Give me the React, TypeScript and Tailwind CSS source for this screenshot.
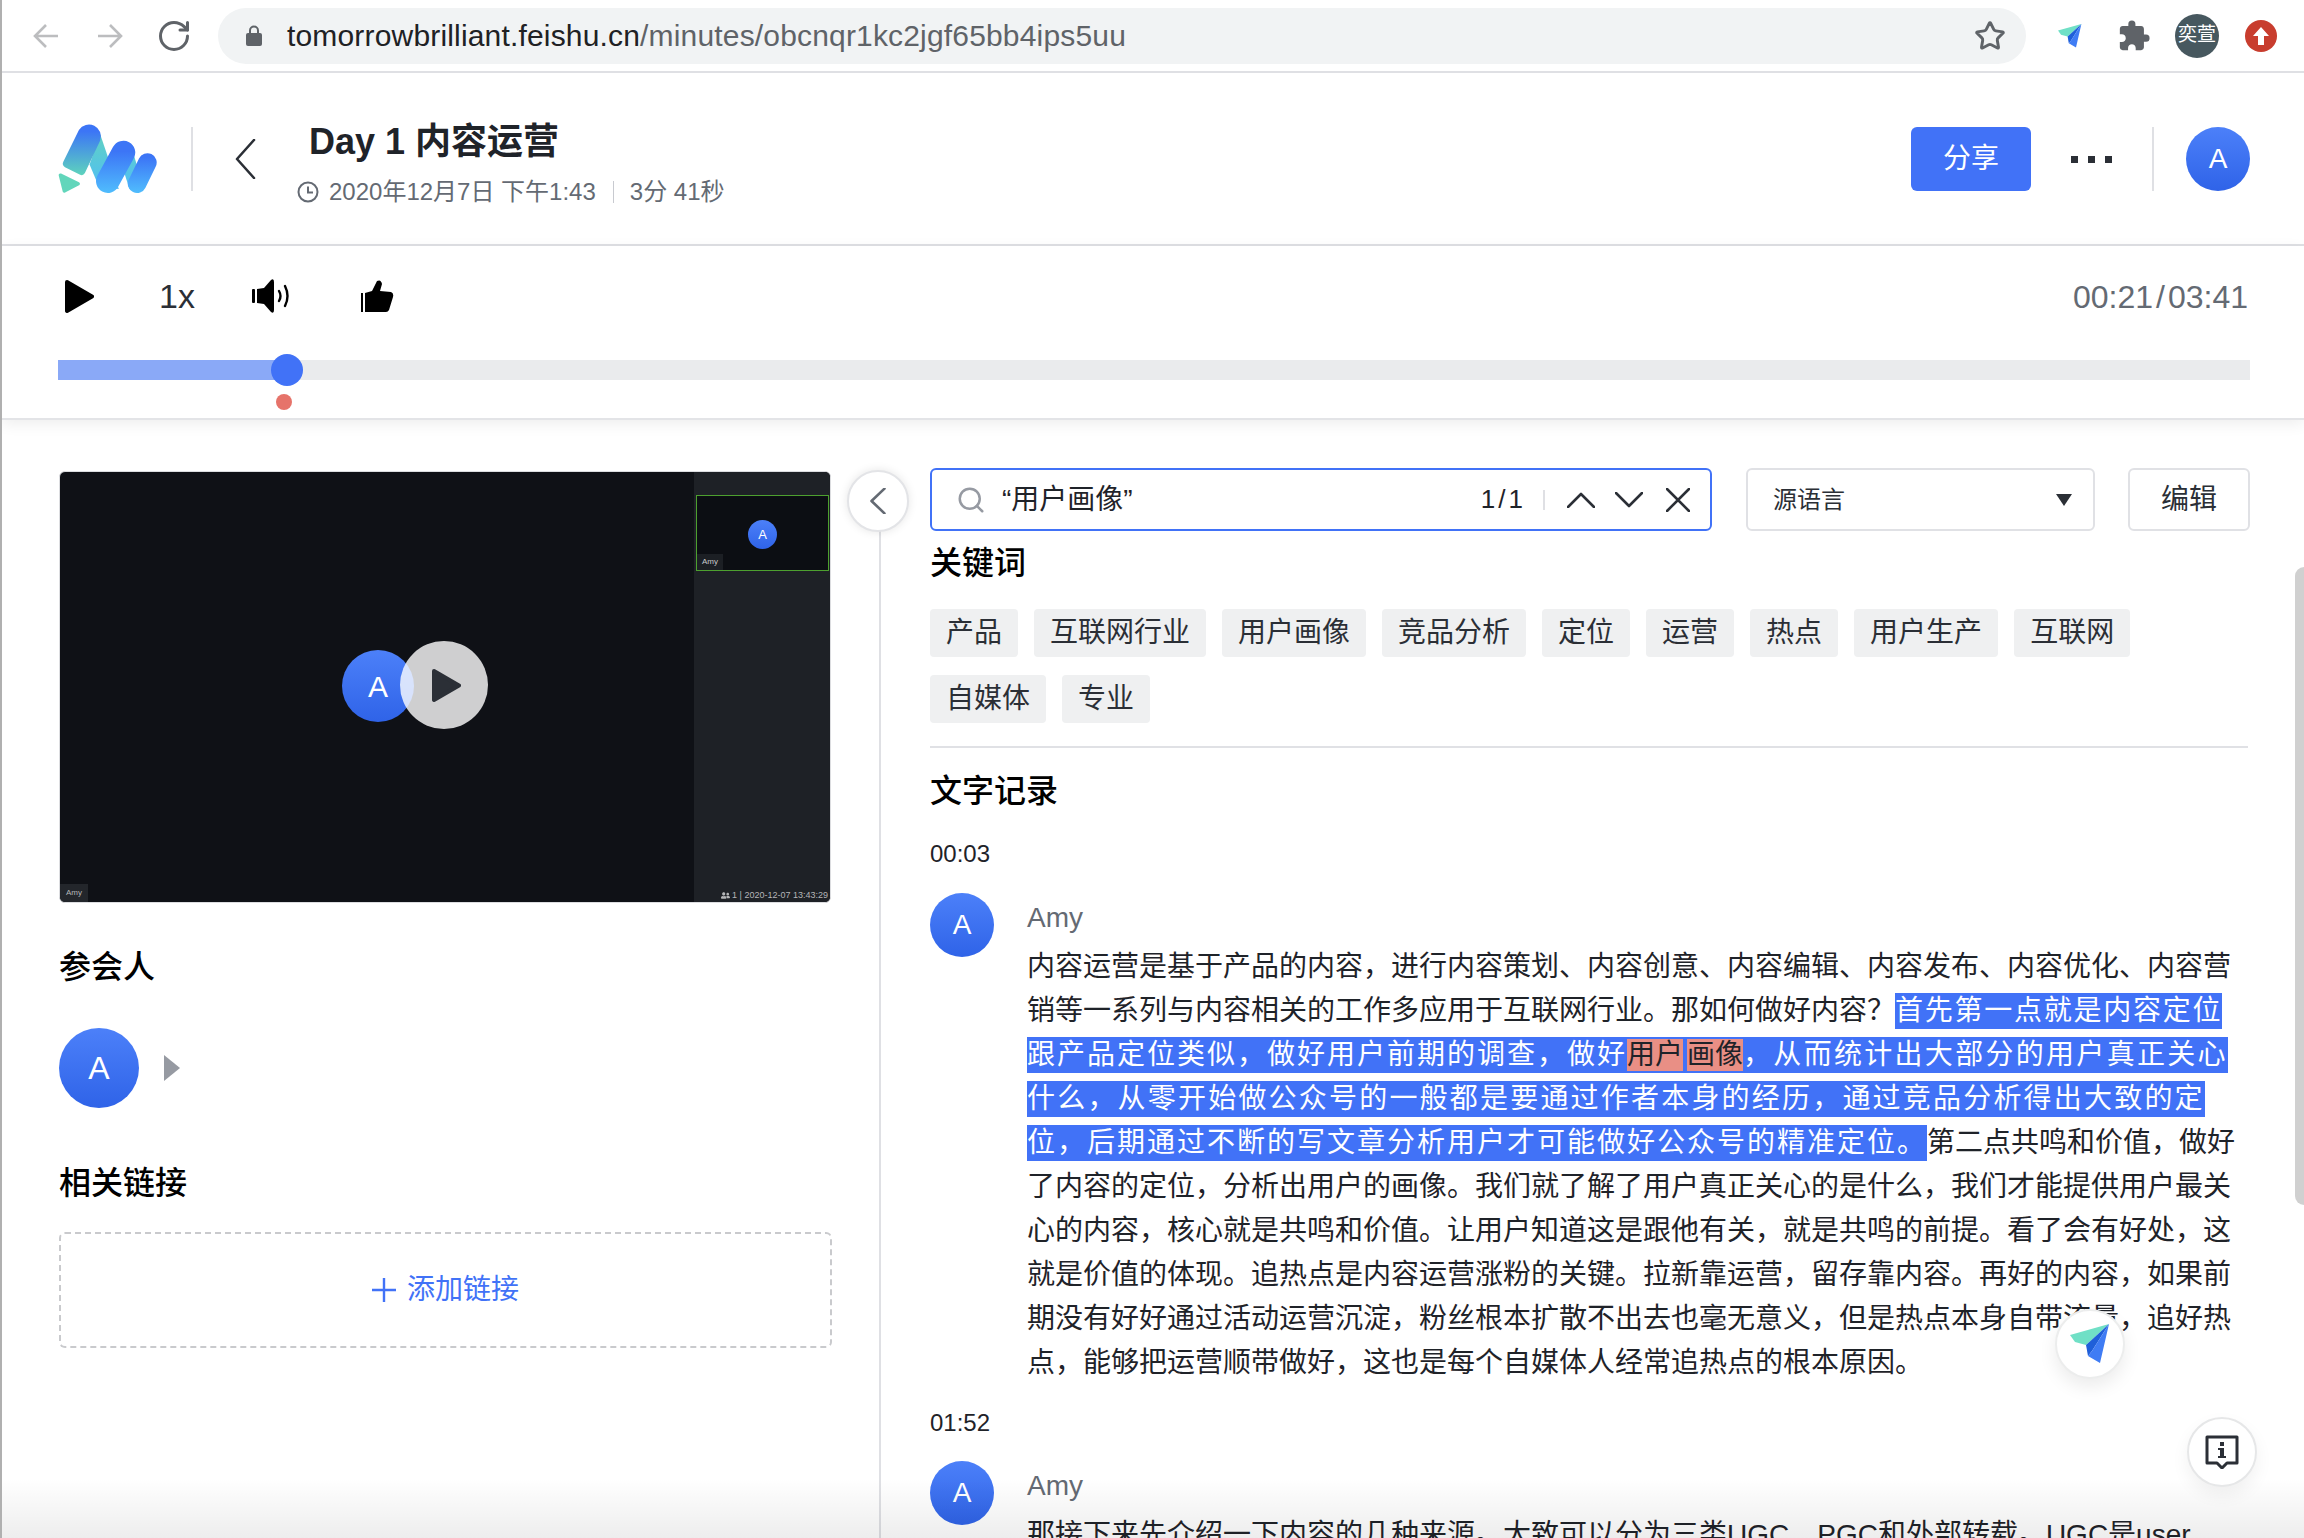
import React from 'react';
import { RotateCw, Star, Search } from 'lucide-react';
import { FaUserFriends } from 'react-icons/fa';
import { MdExtension } from 'react-icons/md';

const keywordsRow1 = ['产品', '互联网行业', '用户画像', '竞品分析', '定位', '运营', '热点', '用户生产', '互联网'];
const keywordsRow2 = ['自媒体', '专业'];

const Avatar: React.FC<{ className: string }> = ({ className }) => (
  <div className={`flex shrink-0 items-center justify-center rounded-full bg-linear-to-b from-[#4c80f9] to-[#2f63e8] text-white ${className}`}>
    A
  </div>
);

const Logo = () => (
  <svg viewBox="50 60 310 230" className="mb-[4px] h-[77px] w-[103px] shrink-0">
    <defs>
      <linearGradient id="pencil" x1="0" y1="72" x2="0" y2="232" gradientUnits="userSpaceOnUse">
        <stop offset="0.15" stopColor="#3c75f6" />
        <stop offset="1" stopColor="#5fd6bb" />
      </linearGradient>
      <linearGradient id="ribbon" x1="0" y1="110" x2="0" y2="280" gradientUnits="userSpaceOnUse">
        <stop offset="0" stopColor="#5fd0c4" />
        <stop offset="1" stopColor="#4fbdfa" />
      </linearGradient>
      <linearGradient id="barTwo" x1="0" y1="125" x2="0" y2="282" gradientUnits="userSpaceOnUse">
        <stop offset="0.2" stopColor="#3c75f6" />
        <stop offset="1" stopColor="#50bdfd" />
      </linearGradient>
      <linearGradient id="barThree" x1="0" y1="162" x2="0" y2="282" gradientUnits="userSpaceOnUse">
        <stop offset="0.1" stopColor="#3c75f6" />
        <stop offset="1" stopColor="#50bdfd" />
      </linearGradient>
    </defs>
    <path d="M180 105 L236 270 L176 262 L148 196 Z" fill="url(#ribbon)" />
    <path d="M276 150 L312 270 L268 270 L246 200 Z" fill="url(#ribbon)" />
    <path d="M116 92 A36 36 0 0 1 180 124 L134 222 Q128 232 118 226 L74 204 Q64 198 69 188 Z" fill="url(#pencil)" />
    <line x1="250" y1="160" x2="203" y2="246" stroke="url(#barTwo)" strokeWidth="71" strokeLinecap="round" />
    <line x1="322" y1="190" x2="291" y2="254" stroke="url(#barThree)" strokeWidth="56" strokeLinecap="round" />
    <path d="M60 228 L114 254 L72 276 Z" fill="#62d6bb" stroke="#62d6bb" strokeWidth="10" strokeLinejoin="round" />
  </svg>
);

const PlaneIcon: React.FC<{ className: string }> = ({ className }) => (
  <svg viewBox="0 0 40 40" className={className}>
    <path d="M0 11 L39 0 L16 21 L5 18 Z" fill="#70e0c6" />
    <path d="M39 0 L16 21 L18 32 L22 27 Z" fill="#1f5fd9" />
    <path d="M39 0 L22 27 L18 32 L30 39 Z" fill="#3f7cf4" />
  </svg>
);

const Speaker = () => (
  <svg viewBox="0 0 39 34" className="ml-[57px] h-[34px] w-[39px]">
    <rect x="0" y="10" width="3" height="14" rx="1" fill="#000" />
    <path d="M5 10 L12 9 L19 1 Q22 -1 22 3 L22 31 Q22 35 19 33 L12 25 L5 24 Z" fill="#000" />
    <path d="M27 12 Q30 17 27 22" fill="none" stroke="#000" strokeWidth="2.4" strokeLinecap="round" />
    <path d="M33 7 Q38 17 33 27" fill="none" stroke="#000" strokeWidth="2.4" strokeLinecap="round" />
  </svg>
);

const Thumb = () => (
  <svg viewBox="0 0 33 32" className="ml-[70px] h-[32px] w-[33px]">
    <rect x="0" y="13" width="2" height="19" fill="#000" />
    <path d="M4 13 L11 11 L16 1 Q20 -1 21 4 L19 11 L30 12 Q33 13 32 17 L28 30 Q27 32 25 32 L4 32 Z" fill="#000" />
  </svg>
);

// thin chevron stretched to its box, dir is the way the tip points
const Chevron: React.FC<{ dir: 'up' | 'down' | 'left'; className: string; color: string }> = ({ dir, className, color }) => {
  const d = dir === 'up' ? 'M1 15 L14 2 L27 15' : dir === 'down' ? 'M1 1 L14 14 L27 1' : 'M19 1 L2 20 L19 39';
  const box = dir === 'left' ? '0 0 21 40' : '0 0 28 16';
  return (
    <svg viewBox={box} preserveAspectRatio="none" className={className}>
      <path d={d} fill="none" stroke={color} strokeWidth="2.6" strokeLinecap="round" strokeLinejoin="round" vectorEffect="non-scaling-stroke" />
    </svg>
  );
};

const Sel: React.FC<{ children: React.ReactNode; className?: string }> = ({ children, className = 'tracking-[2px]' }) => (
  <span className={`inline-block h-[36px] bg-[#4172f7] leading-[36px] text-white ${className}`}>{children}</span>
);

const Mark: React.FC<{ children: React.ReactNode; className?: string }> = ({ children, className = '' }) => (
  <span className={`inline-block h-[36px] bg-[#4172f7] pt-[2px] ${className}`}>
    <span className="block h-[32px] bg-[#e98f85] leading-[32px] text-[#1f2329]">{children}</span>
  </span>
);

const Line: React.FC<{ children: React.ReactNode }> = ({ children }) => (
  <div className="flex h-[44px] items-center whitespace-nowrap text-[28px] text-[#1f2329]">{children}</div>
);

export default function App() {
  return (
    <div className="relative h-screen w-full overflow-hidden border-l-2 border-[#b0b0b0] bg-white [font-family:'Liberation_Sans','Noto_Sans_CJK_SC',sans-serif]">
      {/* browser toolbar */}
      <div className="flex h-[73px] items-center border-b-2 border-[#dfe0e4]">
        <svg viewBox="0 0 26 24" className="ml-[31px] h-[24px] w-[26px]">
          <path d="M25 12 H2 M13 1 L2 12 L13 23" fill="none" stroke="#bcbdbf" strokeWidth="2.6" />
        </svg>
        <svg viewBox="0 0 26 24" className="ml-[38px] h-[24px] w-[26px]">
          <path d="M1 12 H24 M13 1 L24 12 L13 23" fill="none" stroke="#bcbdbf" strokeWidth="2.6" />
        </svg>
        <RotateCw className="ml-[33px] h-[36px] w-[36px] text-[#5f6368]" strokeWidth={2} />
        <div className="ml-[26px] flex h-[56px] w-[1808px] shrink-0 items-center rounded-full bg-[#f1f3f4]">
          <svg viewBox="0 0 16 21" className="ml-[28px] h-[21px] w-[16px]">
            <path d="M4 9 V5.5 A4 4 0 0 1 12 5.5 V9" fill="none" stroke="#5f6368" strokeWidth="2" />
            <rect x="0" y="8" width="16" height="13" rx="2" fill="#5f6368" />
          </svg>
          <span className="ml-[25px] text-[30px] tracking-[0.17px] text-[#202124]">
            tomorrowbrilliant.feishu.cn<span className="text-[#5f6368]">/minutes/obcnqr1kc2jgf65bb4ips5uu</span>
          </span>
          <Star className="mr-[20px] ml-auto h-[32px] w-[32px] text-[#5f6368]" strokeWidth={2.2} />
        </div>
        <PlaneIcon className="ml-[32px] h-[24px] w-[24px]" />
        <MdExtension className="ml-[35px] h-[34px] w-[34px] text-[#5f6368]" />
        <div className="ml-[24px] flex h-[44px] w-[44px] items-center justify-center rounded-full bg-[#47585f] text-[19px] text-white">奕萱</div>
        <div className="ml-[26px] flex h-[32px] w-[32px] items-center justify-center rounded-full bg-[#c83d2e]">
          <svg viewBox="0 0 16 18" className="h-[18px] w-[16px]">
            <path d="M8 0 L16 9 H11 V18 H5 V9 H0 Z" fill="#fff" />
          </svg>
        </div>
      </div>

      {/* page header */}
      <div className="flex h-[173px] items-center border-b-2 border-[#dfe0e4] pt-[1px] pr-[54px] pl-[55px]">
        <Logo />
        <div className="ml-[31px] h-[64px] w-[2px] bg-[#dfe0e4]" />
        <Chevron dir="left" color="#2b2f36" className="ml-[42px] h-[40px] w-[21px]" />
        <div className="ml-[41px] flex flex-col pt-[10px]">
          <div className="ml-[12px] text-[36px] leading-[44px] font-semibold text-[#1f2329]">Day 1 内容运营</div>
          <div className="mt-[12px] flex items-center text-[24px] leading-[32px] text-[#646a73]">
            <svg viewBox="0 0 22 22" className="h-[22px] w-[22px]">
              <circle cx="11" cy="11" r="9.5" fill="none" stroke="#646a73" strokeWidth="2" />
              <path d="M11 5.5 V11.5 H16" fill="none" stroke="#646a73" strokeWidth="2" />
            </svg>
            <span className="ml-[10px]">2020年12月7日 下午1:43</span>
            <span className="ml-[17px] h-[22px] w-[1px] bg-[#c8cad0]" />
            <span className="ml-[16px]">3分 41秒</span>
          </div>
        </div>
        <button className="ml-auto flex h-[64px] w-[120px] items-center justify-center rounded-[6px] bg-[#4172f7] text-[28px] text-white">分享</button>
        <div className="ml-[40px] flex w-[41px] justify-between">
          <span className="h-[7px] w-[7px] bg-[#2b2f36]" />
          <span className="h-[7px] w-[7px] bg-[#2b2f36]" />
          <span className="h-[7px] w-[7px] bg-[#2b2f36]" />
        </div>
        <div className="ml-[40px] h-[64px] w-[2px] bg-[#dfe0e4]" />
        <Avatar className="ml-[32px] h-[64px] w-[64px] text-[28px]" />
      </div>

      {/* player */}
      <div className="relative z-10 h-[174px] border-b-2 border-[#e3e4e7] px-[56px] pt-[15px] shadow-[0_4px_14px_rgba(0,0,0,0.07)]">
        <div className="flex h-[70px] items-center">
          <svg viewBox="0 0 29 35" className="ml-[7px] h-[35px] w-[29px]">
            <path d="M2 3 L27 17.5 L2 32 Z" fill="#000" stroke="#000" strokeWidth="4" strokeLinejoin="round" />
          </svg>
          <span className="ml-[65px] w-[36px] text-[34px] leading-none text-[#2b2f36]">1x</span>
          <Speaker />
          <Thumb />
          <span className="mt-[2px] ml-auto flex text-[32px] leading-none text-[#646a73]">
            00:21<span className="mx-[3px]">/</span>03:41
          </span>
        </div>
        <div className="relative mt-[29px] h-[20px] w-[2192px] bg-[#eaebed]">
          <div className="h-full w-[228px] bg-[#8aa9f7]" />
          <div className="absolute top-[-6px] left-[213px] h-[32px] w-[32px] rounded-full bg-[#4172f7]" />
          <div className="absolute top-[34px] left-[218px] h-[16px] w-[16px] rounded-full bg-[#e6736a]" />
        </div>
      </div>

      {/* body */}
      <div className="relative flex h-[1119px]">
        <div className="w-[830px] shrink-0 pt-[51px] pl-[57px]">
          <div className="relative flex h-[432px] w-[772px] overflow-hidden rounded-[6px] border border-[#dcdde0] bg-[#0f1116]">
            <div className="flex-1" />
            <div className="w-[136px] bg-[#1e2126]" />
            <div className="absolute top-[23px] right-[1px] h-[76px] w-[133px] border border-[#4da02f] bg-[#0c0e13]">
              <Avatar className="absolute top-[24px] left-[51px] h-[29px] w-[29px] text-[13px]" />
              <span className="absolute bottom-0 left-0 bg-[#1c1f24] px-[5px] py-[2px] text-[8px] leading-[12px] text-[#c9cacc]">Amy</span>
            </div>
            <span className="absolute bottom-0 left-0 bg-[#23262b] px-[6px] py-[3px] text-[8px] leading-[12px] text-[#b5b6b8]">Amy</span>
            <span className="absolute right-[2px] bottom-[1px] flex items-center gap-[2px] text-[9px] leading-[12px] text-[#b5b6b8]">
              <FaUserFriends className="h-[9px] w-[9px]" />1 | 2020-12-07 13:43:29
            </span>
            <Avatar className="absolute top-[178px] left-[282px] h-[72px] w-[72px] text-[30px]" />
            <div className="absolute top-[169px] left-[340px] flex h-[88px] w-[88px] items-center justify-center rounded-full bg-white/80">
              <svg viewBox="0 0 29 35" className="ml-[4px] h-[35px] w-[29px]">
                <path d="M2 3 L27 17.5 L2 32 Z" fill="#2b2f36" stroke="#2b2f36" strokeWidth="4" strokeLinejoin="round" />
              </svg>
            </div>
          </div>
          <div className="mt-[42px] text-[32px] leading-[44px] font-medium text-black">参会人</div>
          <div className="mt-[39px] flex items-center">
            <Avatar className="h-[80px] w-[80px] text-[32px]" />
            <div className="ml-[25px] h-0 w-0 border-y-[13px] border-l-[16px] border-y-transparent border-l-[#969aa2]" />
          </div>
          <div className="mt-[53px] text-[32px] leading-[44px] font-medium text-black">相关链接</div>
          <div className="mt-[27px] flex h-[116px] w-[773px] items-center justify-center rounded-[6px] border-2 border-dashed border-[#c9cacd] text-[28px] text-[#4172f7]">
            <svg viewBox="0 0 24 24" className="h-[24px] w-[24px]">
              <path d="M12 0 V24 M0 12 H24" fill="none" stroke="#4172f7" strokeWidth="2.4" />
            </svg>
            <span className="ml-[11px]">添加链接</span>
          </div>
        </div>

        <div className="mt-[100px] ml-[47px] w-[2px] shrink-0 bg-[#dfe0e4]" />

        <div className="absolute top-[50px] left-[845px] flex h-[62px] w-[62px] items-center justify-center rounded-full border-2 border-[#e3e4e7] bg-white shadow-[0_0_10px_rgba(0,0,0,0.1)]">
          <Chevron dir="left" color="#646a73" className="h-[26px] w-[16px]" />
        </div>

        <div className="min-w-0 flex-1 pt-[48px] pl-[49px]">
          <div className="flex h-[63px]">
            <div className="flex w-[782px] items-center rounded-[6px] border-2 border-[#4172f7]">
              <Search className="ml-[24px] h-[30px] w-[30px] text-[#969aa2]" strokeWidth={2} />
              <span className="ml-[16px] text-[28px] text-[#1f2329]">“用户画像”</span>
              <span className="ml-auto text-[26px] text-[#1f2329]">1<span className="mx-[3px]">/</span>1</span>
              <span className="ml-[20px] h-[20px] w-[2px] bg-[#dfe0e4]" />
              <Chevron dir="up" color="#2b2f36" className="ml-[22px] h-[16px] w-[28px]" />
              <Chevron dir="down" color="#2b2f36" className="ml-[20px] h-[16px] w-[28px]" />
              <svg viewBox="0 0 24 24" className="mr-[20px] ml-[23px] h-[24px] w-[24px]">
                <path d="M1 1 L23 23 M23 1 L1 23" fill="none" stroke="#2b2f36" strokeWidth="2.6" strokeLinecap="round" />
              </svg>
            </div>
            <div className="ml-[34px] flex w-[349px] items-center rounded-[6px] border-2 border-[#e0e1e5] px-[25px] text-[24px] text-[#2b2f36]">
              源语言
              <span className="mr-[-4px] ml-auto h-0 w-0 border-x-[8px] border-t-[12px] border-x-transparent border-t-[#2b2f36]" />
            </div>
            <div className="ml-[33px] flex w-[122px] items-center justify-center rounded-[6px] border-2 border-[#e0e1e5] text-[28px] text-[#2b2f36]">编辑</div>
          </div>

          <div className="mt-[10px] text-[32px] leading-[44px] font-medium text-black">关键词</div>
          <div className="mt-[24px] flex gap-x-[16px]">
            {keywordsRow1.map((k) => (
              <span key={k} className="h-[48px] rounded-[4px] bg-[#eff0f1] px-[16px] text-[28px] leading-[48px] whitespace-nowrap text-[#2b2f36]">{k}</span>
            ))}
          </div>
          <div className="mt-[18px] flex gap-x-[16px]">
            {keywordsRow2.map((k) => (
              <span key={k} className="h-[48px] rounded-[4px] bg-[#eff0f1] px-[16px] text-[28px] leading-[48px] whitespace-nowrap text-[#2b2f36]">{k}</span>
            ))}
          </div>
          <div className="mt-[23px] h-[2px] w-[1318px] bg-[#e0e1e5]" />

          <div className="mt-[21px] text-[32px] leading-[44px] font-medium text-black">文字记录</div>
          <div className="mt-[28px] text-[24px] leading-[26px] text-[#1f2329]">00:03</div>
          <div className="mt-[26px] flex">
            <Avatar className="h-[64px] w-[64px] text-[28px]" />
            <div className="ml-[33px] pt-[3px]">
              <div className="mb-[5px] text-[28px] leading-[44px] text-[#646a73]">Amy</div>
              <Line>内容运营是基于产品的内容，进行内容策划、内容创意、内容编辑、内容发布、内容优化、内容营</Line>
              <Line>销等一系列与内容相关的工作多应用于互联网行业。那如何做好内容？<Sel className="tracking-[1.75px]">首先第一点就是内容定位</Sel></Line>
              <Line>
                <Sel>跟产品定位类似，做好用户前期的调查，做好</Sel>
                <Mark className="pr-[4px]">用户</Mark>
                <Mark>画像</Mark>
                <Sel className="tracking-[2.3px]">，从而统计出大部分的用户真正关心</Sel>
              </Line>
              <Line><Sel className="tracking-[2.2px]">什么，从零开始做公众号的一般都是要通过作者本身的经历，通过竞品分析得出大致的定</Sel></Line>
              <Line><Sel>位，后期通过不断的写文章分析用户才可能做好公众号的精准定位。</Sel>第二点共鸣和价值，做好</Line>
              <Line>了内容的定位，分析出用户的画像。我们就了解了用户真正关心的是什么，我们才能提供用户最关</Line>
              <Line>心的内容，核心就是共鸣和价值。让用户知道这是跟他有关，就是共鸣的前提。看了会有好处，这</Line>
              <Line>就是价值的体现。追热点是内容运营涨粉的关键。拉新靠运营，留存靠内容。再好的内容，如果前</Line>
              <Line>期没有好好通过活动运营沉淀，粉丝根本扩散不出去也毫无意义，但是热点本身自带流量，追好热</Line>
              <Line>点，能够把运营顺带做好，这也是每个自媒体人经常追热点的根本原因。</Line>
            </div>
          </div>
          <div className="mt-[25px] text-[24px] leading-[26px] text-[#1f2329]">01:52</div>
          <div className="mt-[25px] flex">
            <Avatar className="h-[64px] w-[64px] text-[28px]" />
            <div className="ml-[33px] pt-[3px]">
              <div className="mb-[5px] text-[28px] leading-[44px] text-[#646a73]">Amy</div>
              <Line>那接下来先介绍一下内容的几种来源。大致可以分为三类UGC、PGC和外部转载。UGC是user</Line>
            </div>
          </div>
        </div>

        {/* scrollbar */}
        <div className="absolute top-[147px] right-0 h-[638px] w-[9px] rounded-l-full bg-[#d0d0d0]" />
      </div>

      {/* bottom fade */}
      <div className="absolute right-0 bottom-0 left-0 h-[60px] bg-linear-to-b from-black/0 to-black/[0.07]" />

      {/* floating buttons */}
      <div className="absolute top-[1309px] left-[2053px] flex h-[70px] w-[70px] items-center justify-center rounded-full border-2 border-[#eceded] bg-white shadow-[0_8px_18px_rgba(0,0,0,0.08)]">
        <PlaneIcon className="h-[40px] w-[40px]" />
      </div>
      <div className="absolute top-[1417px] left-[2185px] flex h-[70px] w-[70px] items-center justify-center rounded-full border-2 border-[#e6e7e8] bg-white shadow-[0_8px_18px_rgba(0,0,0,0.06)]">
        <svg viewBox="0 0 34 34" className="h-[34px] w-[34px]">
          <path d="M2 2 H32 V28 H22 L17 33 L12 28 H2 Z" fill="none" stroke="#2b2f36" strokeWidth="3" strokeLinejoin="round" />
          <rect x="15" y="7" width="4" height="4" fill="#2b2f36" />
          <path d="M13 13 H19 V21 H21 V23 H13 V21 H15 V15 H13 Z" fill="#2b2f36" />
        </svg>
      </div>
    </div>
  );
}
